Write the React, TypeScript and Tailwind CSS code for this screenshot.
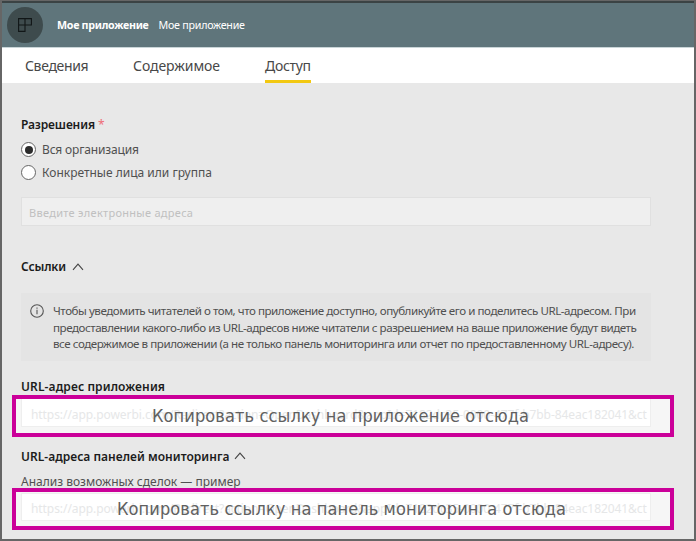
import React from "react";

const APP_URL =
  "https://app.powerbi.com/Redirect?action=OpenDashboard&appId=7182dc35-0000-477f-b7bb-84eac182041&ct";

function Chevron({ className = "" }: { className?: string }) {
  return (
    <svg className={className} width="12" height="8" viewBox="0 0 12 8" fill="none" stroke="#444" strokeWidth="1.1">
      <path d="M1 6.8 6 1.2l5 5.6" />
    </svg>
  );
}

function Radio({ checked }: { checked?: boolean }) {
  return (
    <span className="flex size-[15px] items-center justify-center rounded-full border border-[#666] bg-white">
      {checked && <span className="size-[8px] rounded-full bg-[#2c2c2c]" />}
    </span>
  );
}

function UrlField({ callout, calloutClass, fieldClass }: { callout: string; calloutClass: string; fieldClass: string }) {
  return (
    <div className="relative -ml-[9px] h-[42px] w-[662px] overflow-hidden border-4 border-[#cb0099] bg-[#f6f6f6] pl-[5px]">
      <div
        className={`w-[630px] overflow-hidden whitespace-nowrap border border-[#eeeeee] bg-white pl-[9px] text-[12px] tracking-[-0.07px] text-[#e6e7e8] ${fieldClass}`}
      >
        {APP_URL}
      </div>
      <div
        className={`absolute top-0 whitespace-nowrap font-['DejaVu_Sans_Condensed','DejaVu_Sans',sans-serif] text-[18px] leading-[34px] text-[#606060] ${calloutClass}`}
      >
        {callout}
      </div>
    </div>
  );
}

export default function App() {
  return (
    <div className="flex h-[541px] w-[696px] flex-col overflow-hidden border-t border-r-2 border-b-2 border-l-2 border-[#666666] bg-[#e8e8e8] font-['Noto_Sans',sans-serif]">
      <header className="flex h-[47px] shrink-0 items-center border-t-2 border-b border-t-[#3b4344] border-b-[#c9d5d8] bg-[#5f757b] pl-[5px] text-white">
        <div className="flex size-9 items-center justify-center rounded-full bg-[#3e4b4d]">
          <svg className="-ml-px -mt-px" width="14" height="14" viewBox="0 0 14 14" fill="none" stroke="#111617" strokeWidth="1.1">
            <path d="M.6 .6h12.8v6.4H.6zM.6 7v6.4H7V.6" />
          </svg>
        </div>
        <span className="ml-[14px] mt-px text-[10.7px] font-bold tracking-[-0.28px]">Мое приложение</span>
        <span className="ml-[10px] mt-px text-[10.7px] tracking-[-0.25px]">Мое приложение</span>
      </header>

      <nav className="flex h-[35px] shrink-0 bg-white pl-[23px] text-[14px] leading-[35px] text-[#484848]">
        <span className="w-[108px] tracking-[-0.35px]">Сведения</span>
        <span className="w-[132px] tracking-[-0.07px]">Содержимое</span>
        <span className="h-[35px] w-[46px] whitespace-nowrap border-b-[3px] border-[#f2c811] tracking-[-0.3px]">
          Доступ
        </span>
      </nav>

      <main className="flex flex-col pl-[19px] text-[12px] text-[#505050]">
        <h2 className="mt-[33px] h-[18px] font-semibold leading-[18px] tracking-[-0.13px] text-[#1c1c1c]">
          Разрешения <span className="font-normal text-[#ee6b75]">*</span>
        </h2>
        <label className="mt-[4px] flex h-[23px] items-center gap-[6px] tracking-[-0.15px]">
          <Radio checked />
          Вся организация
        </label>
        <label className="flex h-[23px] items-center gap-[6px]">
          <Radio />
          Конкретные лица или группа
        </label>
        <div className="mt-[13px] h-[29px] w-[630px] border border-[#e0e0e0] bg-[#efefef] pl-[7px] text-[11px] leading-[29px] tracking-[0.29px] text-[#c0c0c0]">
          Введите электронные адреса
        </div>

        <h2 className="mt-[32px] flex h-[18px] items-center gap-[7px] font-semibold tracking-[-0.17px] text-[#1c1c1c]">
          Ссылки <Chevron className="-mt-px -ml-px" />
        </h2>
        <div className="mt-[17px] flex h-[68px] w-[630px] bg-[#e4e4e4] pt-[10px] pl-[9px]">
          <svg className="mt-px shrink-0" width="14" height="14" viewBox="0 0 14 14" fill="none" stroke="#555" strokeWidth="1.1">
            <circle cx="7" cy="7" r="6.3" />
            <path d="M7 5.8v4.4M7 3.6v1.2" />
          </svg>
          <div className="ml-[9px] whitespace-nowrap text-[11.6px] leading-[16.7px]">
            <p className="tracking-[-0.463px]">
              Чтобы уведомить читателей о том, что приложение доступно, опубликуйте его и поделитесь URL-адресом. При
            </p>
            <p className="tracking-[-0.463px]">
              предоставлении какого-либо из URL-адресов ниже читатели с разрешением на ваше приложение будут видеть
            </p>
            <p className="tracking-[-0.45px]">
              все содержимое в приложении (а не только панель мониторинга или отчет по предоставленному URL-адресу).
            </p>
          </div>
        </div>

        <h3 className="mt-[17px] mb-[-1px] h-[18px] font-semibold leading-[18px] tracking-[0.12px] text-[#1c1c1c]">
          URL-адрес приложения
        </h3>
        <UrlField
          callout="Копировать ссылку на приложение отсюда"
          calloutClass="left-[136px] tracking-[0.11px]"
          fieldClass="h-[28px] border-t-0 leading-[31px]"
        />
        <h3 className="mt-[11px] flex h-[18px] items-center gap-[5px] font-semibold tracking-[0.03px] text-[#1c1c1c]">
          URL-адреса панелей мониторинга <Chevron className="-mt-[3px] -ml-px" />
        </h3>
        <p className="mt-[7px] h-[15px] leading-[18px]">Анализ возможных сделок — пример</p>
        <UrlField
          callout="Копировать ссылку на панель мониторинга отсюда"
          calloutClass="left-[101px] tracking-[0.11px]"
          fieldClass="mt-[1px] h-[28px] leading-[29px]"
        />
      </main>
    </div>
  );
}
